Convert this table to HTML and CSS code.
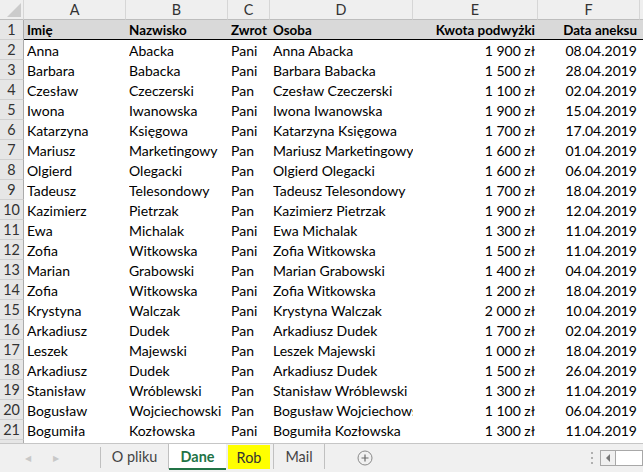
FILE: index.html
```html
<!DOCTYPE html>
<html>
<head>
<meta charset="utf-8">
<link rel="stylesheet" href="styles.css">
</head>
<body>
<div class="sheet">
  <div class="cells">
  <table class="grid">
    <colgroup>
      <col class="w-rh"><col class="w-a"><col class="w-b"><col class="w-c"><col class="w-d"><col class="w-e"><col class="w-f"><col class="w-g">
    </colgroup>
    <thead>
      <tr class="colhead">
        <th class="corner"><span class="tri"></span></th>
        <th>A</th><th>B</th><th>C</th><th>D</th><th>E</th><th>F</th><th></th>
      </tr>
    </thead>
    <tbody id="body">
      <tr class="hdr">
        <td class="rh">1</td><td>Imię</td><td>Nazwisko</td><td>Zwrot</td><td>Osoba</td><td class="r">Kwota podwyżki</td><td class="r">Data aneksu</td><td></td>
      </tr>
    </tbody>
  </table>
  </div>
  <div class="tabs">
    <div class="nav"><span class="arr">&#9664;</span><span class="arr">&#9654;</span></div>
    <div class="tab">O pliku</div>
    <div class="tab active">Dane</div>
    <div class="tab yellow">Rob</div>
    <div class="tab">Mail</div>
    <div class="add"><svg width="16" height="16" viewBox="0 0 16 16"><circle cx="8" cy="8" r="7" fill="none" stroke="#8a8a8a" stroke-width="1"/><path d="M8 4.5v7M4.5 8h7" stroke="#6a6a6a" stroke-width="1.2"/></svg></div>
    <div class="spacer"></div>
    <div class="dots"><span></span><span></span><span></span></div>
    <div class="hscroll"><div class="sbtn"><span class="sarr"></span></div><div class="strack"></div></div>
  </div>
</div>
<script src="app.js"></script>
</body>
</html>
```

FILE: app.js
```js
var rows = [
["Anna","Abacka","Pani","Anna Abacka","1 900 zł","08.04.2019"],
["Barbara","Babacka","Pani","Barbara Babacka","1 500 zł","28.04.2019"],
["Czesław","Czeczerski","Pan","Czesław Czeczerski","1 100 zł","02.04.2019"],
["Iwona","Iwanowska","Pani","Iwona Iwanowska","1 900 zł","15.04.2019"],
["Katarzyna","Księgowa","Pani","Katarzyna Księgowa","1 700 zł","17.04.2019"],
["Mariusz","Marketingowy","Pan","Mariusz Marketingowy","1 600 zł","01.04.2019"],
["Olgierd","Olegacki","Pan","Olgierd Olegacki","1 600 zł","06.04.2019"],
["Tadeusz","Telesondowy","Pan","Tadeusz Telesondowy","1 700 zł","18.04.2019"],
["Kazimierz","Pietrzak","Pan","Kazimierz Pietrzak","1 900 zł","12.04.2019"],
["Ewa","Michalak","Pani","Ewa Michalak","1 300 zł","11.04.2019"],
["Zofia","Witkowska","Pani","Zofia Witkowska","1 500 zł","11.04.2019"],
["Marian","Grabowski","Pan","Marian Grabowski","1 400 zł","04.04.2019"],
["Zofia","Witkowska","Pani","Zofia Witkowska","1 200 zł","18.04.2019"],
["Krystyna","Walczak","Pani","Krystyna Walczak","2 000 zł","10.04.2019"],
["Arkadiusz","Dudek","Pan","Arkadiusz Dudek","1 700 zł","02.04.2019"],
["Leszek","Majewski","Pan","Leszek Majewski","1 000 zł","18.04.2019"],
["Arkadiusz","Dudek","Pan","Arkadiusz Dudek","1 500 zł","26.04.2019"],
["Stanisław","Wróblewski","Pan","Stanisław Wróblewski","1 300 zł","11.04.2019"],
["Bogusław","Wojciechowski","Pan","Bogusław Wojciechowski","1 100 zł","06.04.2019"],
["Bogumiła","Kozłowska","Pani","Bogumiła Kozłowska","1 300 zł","11.04.2019"],
["","","","","",""]
];
var tb = document.getElementById("body");
rows.forEach(function (r, i) {
  var tr = document.createElement("tr");
  var h = document.createElement("td");
  h.className = "rh";
  h.textContent = r[0] ? String(i + 2) : "";
  tr.appendChild(h);
  r.forEach(function (v, j) {
    var td = document.createElement("td");
    if (j >= 4) td.className = "r";
    var s = document.createElement("div");
    s.className = "clip";
    s.textContent = v;
    td.appendChild(s);
    tr.appendChild(td);
  });
  tr.appendChild(document.createElement("td"));
  tb.appendChild(tr);
});
```

FILE: styles.css
```css
* { box-sizing: border-box; }
html, body { margin: 0; padding: 0; }
body {
  width: 643px;
  height: 472px;
  overflow: hidden;
  background: #fff;
  font-family: Lato, "Open Sans", sans-serif;
  font-size: 14px;
  color: #000;
}
.sheet { display: flex; flex-direction: column; height: 472px; }
.cells { height: 443px; overflow: hidden; flex: none; }
.grid {
  table-layout: fixed;
  border-collapse: separate;
  border-spacing: 0;
  width: 646px;
}
.w-rh { width: 24px; }
.w-a { width: 102px; }
.w-b { width: 102px; }
.w-c { width: 42px; }
.w-d { width: 143px; }
.w-e { width: 125px; }
.w-f { width: 102px; }
.w-g { width: 6px; }
.grid td, .grid th {
  height: 20px;
  padding: 1px 0 0 3px;
  white-space: nowrap;
  overflow: hidden;
  line-height: 18px;
  vertical-align: middle;
}
.grid td.r { padding: 1px 3px 0 0; text-align: right; }
.colhead th {
  background: #efefef;
  font-weight: normal;
  font-size: 14.4px;
  color: #333;
  border-right: 1px solid #d6d6d6;
  border-bottom: 1px solid #bdbdbd;
  text-align: center;
  padding: 0;
}
.corner { position: relative; }
.tri {
  position: absolute;
  right: 2px; bottom: 2px;
  width: 0; height: 0;
  border-left: 14px solid transparent;
  border-bottom: 14px solid #cbcbcb;
}
.grid td.rh {
  background: #e6e6e6;
  color: #333;
  font-size: 14.4px;
  text-align: center;
  border-right: 1px solid #ababab;
  border-bottom: 1px solid #d0d0d0;
  padding: 1px 0 0 0;
}
.hdr td {
  background: #d9d9d9;
  font-weight: bold;
  font-size: 13.4px;
  border-bottom: 1px solid #000;
}
.hdr td.rh { background: #e6e6e6; font-weight: normal; font-size: 14.4px; border-bottom: 1px solid #d0d0d0; }
.clip { overflow: hidden; white-space: nowrap; }
.tabs {
  height: 29px;
  flex: none;
  display: flex;
  align-items: stretch;
  background: #f0f0f0;
  border-top: 1px solid #c6c6c6;
  color: #444;
  font-size: 14.4px;
}
.nav { width: 101px; display: flex; align-items: center; padding-left: 25px; gap: 22px; border-right: 1px solid #c0c0c0; margin: 3px 0 4px; }
.arr { font-size: 8px; color: #c8c8c8; }
.tab {
  display: flex; align-items: center; justify-content: center;
  border-right: 1px solid #c0c0c0;
  margin: 0 0 3px;
}
.tab:nth-of-type(2) { width: 68px; }
.tab.active {
  width: 57px;
  background: #fff;
  color: #217346;
  font-weight: bold;
  border-bottom: 2px solid #217346;
  border-right: none;
  margin-bottom: 2px;
}
.tab.yellow { width: 42px; background: #ffff00; color: #333; border-right: none; margin: 1px 3px 3px 2px; }
.tab.yellow + .tab { width: 52px; border-left: 1px solid #c0c0c0; }
.add { width: 80px; display: flex; align-items: center; justify-content: center; }
.spacer { flex: 1; }
.dots { display: flex; flex-direction: column; justify-content: center; gap: 3px; width: 16px; align-items: center; }
.dots span { width: 2px; height: 2px; background: #b0b0b0; }
.hscroll { width: 43px; display: flex; align-items: center; }
.sbtn { width: 16px; height: 16px; border: 1px solid #a8a8a8; background: #f0f0f0; display: flex; align-items: center; justify-content: center; }
.sarr { width: 0; height: 0; border-top: 4px solid transparent; border-bottom: 4px solid transparent; border-right: 4px solid #777; }
.strack { flex: 1; height: 16px; background: #fff; border: 1px solid #a8a8a8; border-left: none; }
```
